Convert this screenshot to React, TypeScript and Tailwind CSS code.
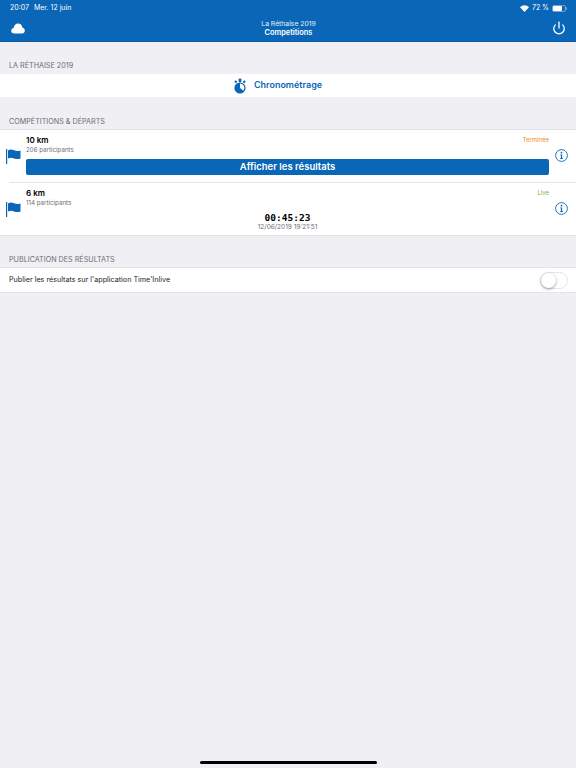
import { Power } from "lucide-react";

function Flag() {
  return (
    <svg width="15" height="15" viewBox="0 0 15 15" className="shrink-0">
      <rect x="0" y="0" width="1.2" height="15" fill="#0a66b7" />
      <path d="M2 1.4 C4 0.2 6 0.4 8 1.2 C10 2 12.3 2.2 14.5 1.4 L14.5 9.6 C12.3 10.4 10 10.2 8 9.4 C6 8.6 4 8.4 2 9.6 Z" fill="#0a66b7" />
    </svg>
  );
}

function Stopwatch() {
  return (
    <svg width="12" height="16" viewBox="0 0 12 16">
      <circle cx="6" cy="10" r="5.6" fill="#0a66b7" />
      <rect x="4.6" y="0.4" width="2.8" height="3.8" rx="1" fill="#0a66b7" />
      <rect x="9.2" y="2.6" width="2" height="2.4" rx="0.5" fill="#0a66b7" transform="rotate(45 10.2 3.8)" />
      <rect x="0.8" y="2.6" width="2" height="2.4" rx="0.5" fill="#0a66b7" transform="rotate(-45 1.8 3.8)" />
      <path d="M6 10 L6 5.6 A4.4 4.4 0 0 1 9.4 12.8 Z" fill="#ffffff" />
    </svg>
  );
}

function InfoIcon() {
  return (
    <svg width="13" height="13" viewBox="0 0 13 13" fill="none">
      <circle cx="6.5" cy="6.5" r="5.9" stroke="#0a66b7" strokeWidth="0.9" />
      <circle cx="6.5" cy="3.7" r="0.85" fill="#0a66b7" />
      <path d="M5.2 5.5 H7.1 V9.3 H8 V10 H5 V9.3 H5.9 V6.2 H5.2 Z" fill="#0a66b7" />
    </svg>
  );
}

function SectionLabel({ children, className }: { children: string; className: string }) {
  return <div className={`pl-[9px] text-[7.2px] leading-[10px] text-[#6d6d72] ${className}`}>{children}</div>;
}

function RaceRow({
  name,
  count,
  status,
  statusColor,
  children,
}: {
  name: string;
  count: string;
  status: string;
  statusColor: string;
  children: React.ReactNode;
}) {
  return (
    <div className="flex h-[52px]">
      <div className="w-[26px] shrink-0 pl-[6px] pt-[19px]">
        <Flag />
      </div>
      <div className="flex h-full min-w-0 flex-1 flex-col pt-[5px]">
        <div className="flex items-start justify-between">
          <div className="text-[8px] leading-[10px] font-semibold text-black">{name}</div>
          <div className={`text-[6px] leading-[10px] ${statusColor}`}>{status}</div>
        </div>
        <div className="text-[6.2px] leading-[9px] text-[#6d6d72]">{count}</div>
        {children}
      </div>
      <div className="flex w-[27px] shrink-0 justify-end pr-[8px] pt-[19px]">
        <InfoIcon />
      </div>
    </div>
  );
}

export default function App() {
  return (
    <div className="relative flex h-[768px] w-[576px] flex-col overflow-hidden bg-[#efeff4] font-['Inter',sans-serif]">
      <header className="h-[42px] shrink-0 border-b border-[#0a5ca5] bg-[#0a66b7] text-white">
        <div className="flex h-[15px] items-center justify-between pl-[10px] pr-[9px] pt-[1px] text-[7px]">
          <div className="flex gap-[5px]">
            <span>20:07</span>
            <span>Mer. 12 juin</span>
          </div>
          <div className="flex items-center gap-[3px]">
            <svg width="9" height="7" viewBox="0 0 9 7" fill="white">
              <path d="M4.5 7 L0 2.2 C2.5 -0.5 6.5 -0.5 9 2.2 Z" />
            </svg>
            <span>72 %</span>
            <div className="flex items-center">
              <div className="h-[7px] w-[14px] rounded-[2px] border border-white/40">
                <div className="h-full w-[76%] rounded-[1px] bg-white" />
              </div>
              <div className="h-[3px] w-[1px] rounded-r bg-white/40" />
            </div>
          </div>
        </div>
        <div className="flex h-[26px] items-center justify-between pl-[11px] pr-[10px]">
          <svg width="14" height="11" viewBox="0 0 14 11" fill="white">
            <path d="M3.2 10.5 C1.4 10.5 0.2 9.3 0.2 7.8 C0.2 6.4 1.2 5.3 2.6 5.1 C2.9 2.6 4.8 0.6 7.2 0.6 C9.4 0.6 11 2.2 11.3 4.4 C12.8 4.7 13.8 5.9 13.8 7.5 C13.8 9.2 12.6 10.5 10.9 10.5 Z" />
          </svg>
          <div className="flex flex-col items-center">
            <div className="text-[6.8px] leading-[9px] text-white/90">La Réthaise 2019</div>
            <div className="text-[7.4px] leading-[9px] font-semibold">Competitions</div>
          </div>
          <Power size={14} strokeWidth={2.2} />
        </div>
      </header>

      <SectionLabel className="mt-[19px]">LA RÉTHAISE 2019</SectionLabel>
      <div className="mt-[3px] flex h-[23px] items-center justify-center gap-[8px] bg-white pr-[20px]">
        <Stopwatch />
        <span className="mb-[1px] text-[9px] font-semibold text-[#0a66b7]">Chronométrage</span>
      </div>

      <SectionLabel className="mt-[20px]">COMPÉTITIONS &amp; DÉPARTS</SectionLabel>
      <div className="mt-[2px] border-y border-[#e4e4e8] bg-white">
        <RaceRow name="10 km" count="206 participants" status="Terminée" statusColor="text-[#f08a24]">
          <div className="mt-[5px] flex h-[16px] items-center justify-center rounded-[2px] bg-[#0a66b7] text-[9.5px] font-semibold text-white">
            Afficher les résultats
          </div>
        </RaceRow>
        <div className="ml-[9px] h-px bg-[#e4e4e8]" />
        <RaceRow name="6 km" count="114 participants" status="Live" statusColor="text-[#7cb342]">
          <div className="mt-[5px] text-center font-['DejaVu_Sans_Mono',monospace] text-[9.5px] leading-[11px] font-bold text-black">
            00:45:23
          </div>
          <div className="text-center text-[6.5px] leading-[8px] text-[#6d6d72]">12/06/2019 19:21:51</div>
        </RaceRow>
      </div>

      <SectionLabel className="mt-[19px]">PUBLICATION DES RÉSULTATS</SectionLabel>
      <div className="mt-[2px] flex h-[26px] items-center justify-between border-y border-[#e4e4e8] bg-white pl-[9px] pr-[8px]">
        <span className="text-[7.2px] text-[#1c1c1e]">Publier les résultats sur l'application Time'Inlive</span>
        <div className="h-[17px] w-[28px] rounded-full border border-[#e5e5ea] bg-white">
          <div className="h-[15px] w-[15px] rounded-full bg-white shadow-[0_1px_3px_rgba(0,0,0,0.4)]" />
        </div>
      </div>

      <div className="absolute bottom-[4px] left-[200px] h-[3px] w-[177px] rounded-full bg-black" />
    </div>
  );
}
